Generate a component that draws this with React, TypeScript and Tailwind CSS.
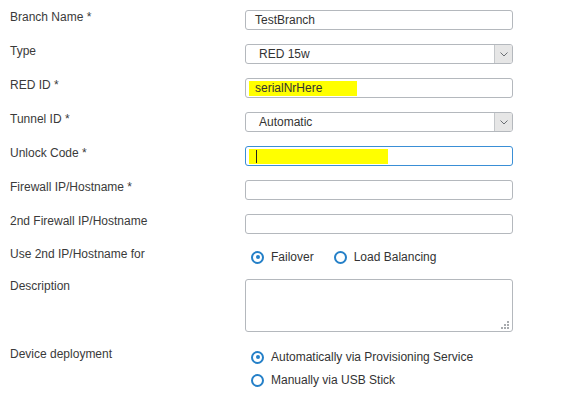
import React from 'react';

const font = { fontFamily: '"Liberation Sans", Arial, sans-serif' };

const Label = ({ children }: { children: React.ReactNode }) => (
  <div className="w-[235px] shrink-0 text-[12px] leading-[14px] text-[#3a3a3a]">{children}</div>
);

const TextInput = ({ value, focused }: { value?: string; focused?: boolean }) => (
  <div
    className={`h-[20px] w-[268px] rounded-[3px] border bg-white px-[9px] text-[12px] leading-[18px] text-[#333] ${
      focused ? 'border-[#3a8fd6]' : 'border-[#b4b8bd]'
    }`}
  >
    {value}
  </div>
);

const Select = ({ value }: { value: string }) => (
  <div className="flex h-[20px] w-[268px] rounded-[3px] border border-[#b4b8bd] bg-white text-[12px] leading-[18px] text-[#333]">
    <div className="flex-1 pl-[13px]">{value}</div>
    <div className="flex w-[18px] items-center justify-center rounded-r-[2px] border-l border-[#c4c7ca] bg-[#e6e6e6]">
      <svg width="8" height="5" viewBox="0 0 8 5" fill="none">
        <path d="M0.5 0.5 L4 4 L7.5 0.5" stroke="#6b6f73" strokeWidth="1" />
      </svg>
    </div>
  </div>
);

const Radio = ({ checked, label }: { checked?: boolean; label: string }) => (
  <div className="flex items-center gap-[7px] text-[12px] leading-[14px] text-[#333]">
    <div className="flex h-[13px] w-[13px] items-center justify-center rounded-full border-[2.5px] border-[#2580c8] bg-white">
      {checked && <div className="h-[4px] w-[4px] rounded-full bg-[#2580c8]" />}
    </div>
    <span>{label}</span>
  </div>
);

const Highlight = ({ children, width, cursor }: { children?: React.ReactNode; width: number; cursor?: boolean }) => (
  <div className="relative h-[20px] w-[268px]">
    <div className="absolute left-[3px] top-[2px] h-[15px] bg-[#ffff00]" style={{ width }} />
    {cursor && <div className="absolute left-[10px] top-[3px] h-[13px] w-px bg-[#222]" />}
    <div className="relative h-[20px] px-[9px] text-[12px] leading-[18px] text-[#333]">{children}</div>
  </div>
);

export default function App() {
  return (
    <div className="h-[403px] w-[566px] bg-white pl-[10px] pt-[10px]" style={font}>
      <div className="flex flex-col gap-[14px]">
        <div className="flex">
          <Label>Branch Name *</Label>
          <TextInput value="TestBranch" />
        </div>
        <div className="flex">
          <Label>Type</Label>
          <Select value="RED 15w" />
        </div>
        <div className="flex">
          <Label>RED ID *</Label>
          <div className="h-[20px] w-[268px] rounded-[3px] border border-[#b4b8bd] bg-white">
            <Highlight width={108}>serialNrHere</Highlight>
          </div>
        </div>
        <div className="flex">
          <Label>Tunnel ID *</Label>
          <Select value="Automatic" />
        </div>
        <div className="flex">
          <Label>Unlock Code *</Label>
          <div className="h-[20px] w-[268px] rounded-[3px] border border-[#3a8fd6] bg-white">
            <Highlight width={139} cursor />
          </div>
        </div>
        <div className="flex">
          <Label>Firewall IP/Hostname *</Label>
          <TextInput />
        </div>
        <div className="flex">
          <Label>2nd Firewall IP/Hostname</Label>
          <TextInput />
        </div>
      </div>

      <div className="mt-[13px] flex">
        <Label>Use 2nd IP/Hostname for</Label>
        <div className="flex gap-[20px] pl-[6px] pt-[3px]">
          <Radio checked label="Failover" />
          <Radio label="Load Balancing" />
        </div>
      </div>

      <div className="mt-[15px] flex">
        <Label>Description</Label>
        <div className="relative h-[53px] w-[268px] rounded-[3px] border border-[#b4b8bd] bg-white">
          <svg className="absolute bottom-[2px] right-[3px]" width="8" height="8" viewBox="0 0 8 8">
            <rect x="6" y="0" width="2" height="2" fill="#a8abae" />
            <rect x="3" y="3" width="2" height="2" fill="#a8abae" />
            <rect x="6" y="3" width="2" height="2" fill="#a8abae" />
            <rect x="0" y="6" width="2" height="2" fill="#a8abae" />
            <rect x="3" y="6" width="2" height="2" fill="#a8abae" />
            <rect x="6" y="6" width="2" height="2" fill="#a8abae" />
          </svg>
        </div>
      </div>

      <div className="mt-[15px] flex">
        <Label>Device deployment</Label>
        <div className="flex flex-col gap-[9px] pl-[6px] pt-[3px]">
          <Radio checked label="Automatically via Provisioning Service" />
          <Radio label="Manually via USB Stick" />
        </div>
      </div>
    </div>
  );
}
